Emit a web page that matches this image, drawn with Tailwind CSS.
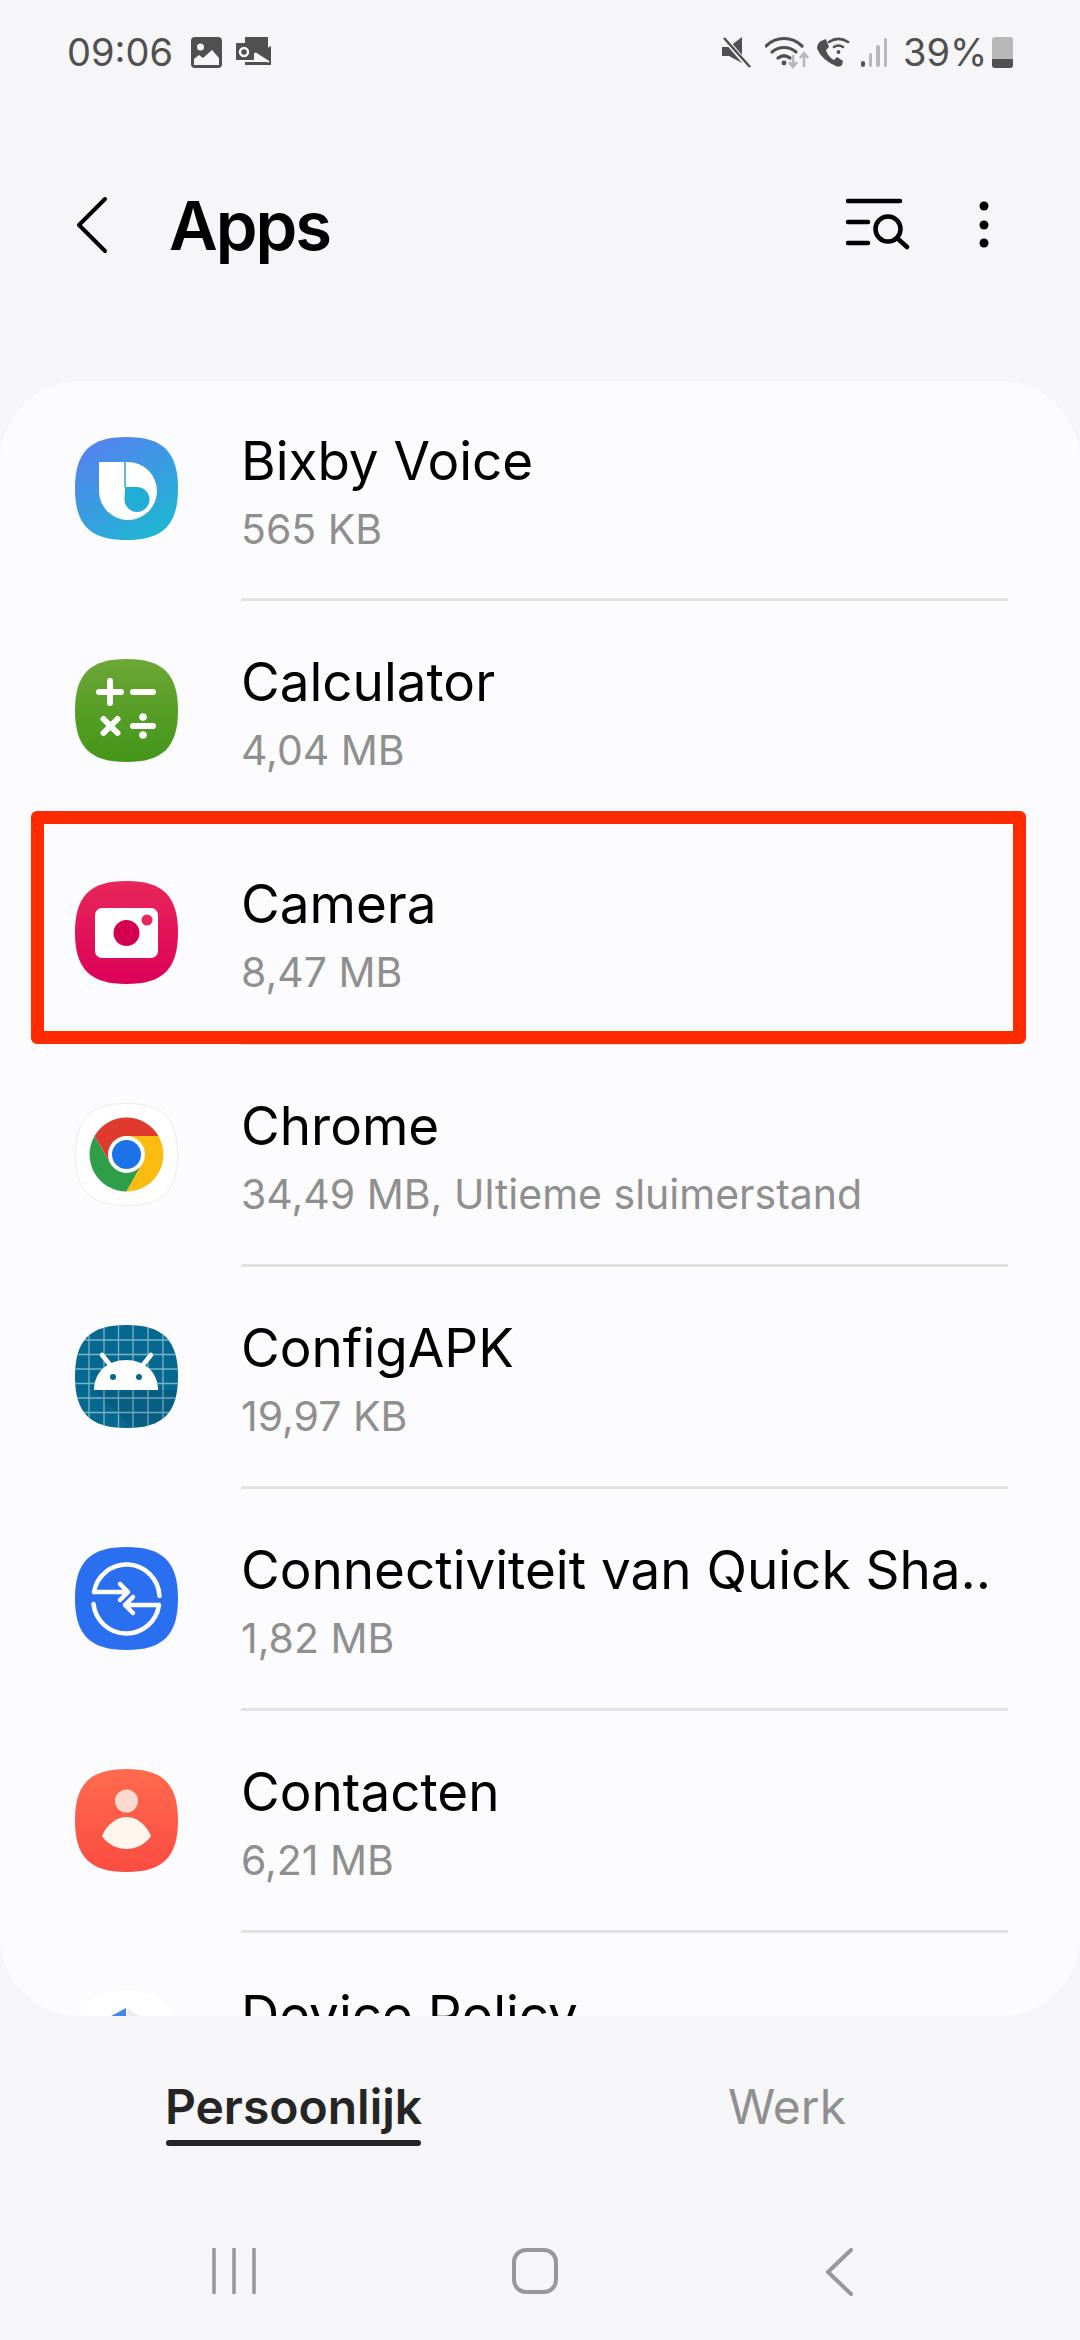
<!DOCTYPE html>
<html lang="en">
<head>
    <meta charset="UTF-8">
    <meta name="viewport" content="width=device-width, initial-scale=1.0">
    <title>Apps</title>
    <script src="https://cdn.jsdelivr.net/npm/@tailwindcss/browser@4"></script>
</head>
<body class="bg-[#f6f6f8]">
<div class="relative w-[1080px] h-[2340px] flex flex-col overflow-hidden font-['Inter',sans-serif]">

    <!-- Status bar -->
    <div class="h-[104px] pl-[67px] pr-[67px] flex items-center justify-between text-[#505050]">
        <div class="flex items-center">
            <span class="text-[38px] leading-none w-[105px] whitespace-nowrap">09:06</span>
            <svg class="ml-[19px]" width="31" height="31" viewBox="0 0 31 31"><rect width="31" height="31" rx="4" fill="#505050"/><circle cx="9.500" cy="10" r="3.500" fill="#f6f6f8"/><path d="M3 28v-6l5-4 4 3 9-8 7 8v7z" fill="#f6f6f8"/></svg>
            <svg class="ml-[14px]" width="36" height="30" viewBox="0 0 36 30"><path d="M9 0h23v11l-11 7-4-3V7H9zM9 25h26v3H9z" fill="#505050"/><rect y="6" width="18" height="17" rx="1" fill="#505050"/><circle cx="8" cy="15" r="4" fill="none" stroke="#f6f6f8" stroke-width="2.500"/><path d="M21 17l14-8v17z" fill="#505050"/><path d="M19 16l14 9" stroke="#f6f6f8" stroke-width="2"/></svg>
        </div>
        <div class="flex items-center">
            <svg width="30" height="32" viewBox="0 0 30 32"><path d="M1 11h7L21 1v26L8 20H1z" fill="#505050"/><path d="M3 2l25 29" stroke="#f6f6f8" stroke-width="5"/><path d="M3 2l26 29" stroke="#505050" stroke-width="2.500"/></svg>
            <svg class="ml-[14px]" width="44" height="34" viewBox="0 0 44 34"><g fill="none" stroke="#505050" stroke-width="3.200" stroke-linecap="round"><path d="M1 11C11 1 27 1 37 11"/><path d="M7 17c7-6 17-6 24 0"/><path d="M13 23c4-3 8-3 12 0"/></g><circle cx="19" cy="28" r="2.400" fill="#505050"/><g fill="none" stroke="#b8b8b8" stroke-width="2.600"><path d="M28 20v12M24 27l4 5 4-5"/><path d="M39 32V18M35 23l4-5 4 5"/></g></svg>
            <svg class="ml-[7px]" width="34" height="30" viewBox="0 0 34 30"><path d="M5 4l5-2 3 8-3 3c1 4 4 8 8 10l3-3 6 4-1 4c-2 2-5 2-8 0C11 25 3 18 1 11 1 8 3 5 5 4z" fill="#505050"/><g fill="none" stroke="#505050" stroke-width="2.600" stroke-linecap="round"><path d="M13 5c6-4 13-4 19 0"/><path d="M18 10c3-2 6-2 9 0"/></g><circle cx="22.500" cy="15" r="1.900" fill="#505050"/></svg>
            <div class="ml-[11px] flex items-end gap-[4px] h-[30px]">
                <div class="w-[3.500px] h-[6px] rounded-full bg-[#505050]"></div>
                <div class="w-[3.500px] h-[14px] rounded-full bg-[#b8b8b8]"></div>
                <div class="w-[3.500px] h-[22px] rounded-full bg-[#b8b8b8]"></div>
                <div class="w-[3.500px] h-[29px] rounded-full bg-[#b8b8b8]"></div>
            </div>
            <span class="ml-[16px] w-[82px] text-[38px] leading-none whitespace-nowrap">39%</span>
            <div class="ml-[7px] w-[21px] h-[31px] rounded-[3px] bg-[#b8b8b8] flex flex-col justify-end overflow-hidden">
                <div class="h-[9px] bg-[#505050]"></div>
            </div>
        </div>
    </div>

    <!-- Header -->
    <div class="h-[277px] pb-[35px] flex items-center">
        <svg class="ml-[75px]" width="34" height="58" viewBox="0 0 34 58"><path d="M30 3L4 29l26 26" fill="none" stroke="#000" stroke-width="4" stroke-linecap="round" stroke-linejoin="round"/></svg>
        <h1 class="ml-[60px] text-[67px] leading-none font-semibold tracking-[-2px] text-black">Apps</h1>
        <svg class="ml-auto" width="64" height="54" viewBox="0 0 64 54"><g stroke="#000" stroke-width="4.500" stroke-linecap="round" fill="none"><path d="M2 3h52M2 24h20M2 45h20"/><circle cx="42" cy="31" r="12.500"/><path d="M51 40l10 9"/></g></svg>
        <svg class="ml-[69px] mr-[91px]" width="10" height="50" viewBox="0 0 10 50"><circle cx="5" cy="6" r="4.500"/><circle cx="5" cy="25" r="4.500"/><circle cx="5" cy="43" r="4.500"/></svg>
    </div>

    <!-- App list -->
    <div class="h-[1635px] bg-[#fcfcfe] rounded-[80px] overflow-hidden">
        <div class="h-[220px] flex items-center pl-[75px]">
            <svg class="-mt-[6px]" width="103" height="103" viewBox="0 0 103 103"><defs><linearGradient id="bx" x1="0.15" y1="0" x2="0.8" y2="1"><stop offset="0" stop-color="#5680f0"/><stop offset="1" stop-color="#1db8d2"/></linearGradient></defs><path d="M51.500 0C88 0 103 15 103 51.500S88 103 51.500 103 0 88 0 51.500 15 0 51.500 0z" fill="url(#bx)"/><path d="M24 25H53A29 29 0 0 1 53 83A29 29 0 0 1 24 54Z" fill="#fff"/><path d="M50 25V50" stroke="#2aa5dc" stroke-width="1.500"/><path d="M50 50H62A12.500 12.500 0 1 1 49.500 62.500Z" fill="#22add6"/></svg>
            <div class="ml-[63px] flex-1 mr-[72px] h-full pt-[5px] border-b-[3px] border-[#e2e2e4] flex flex-col justify-center">
                <div class="text-[53px] leading-[72px] text-black whitespace-nowrap">Bixby Voice</div>
                <div class="mt-[1px] text-[41px] leading-[62px] text-[#8f8f8f] whitespace-nowrap">565 KB</div>
            </div>
        </div>
        <div class="h-[222px] flex items-center pl-[75px]">
            <svg class="-mt-[3px]" width="103" height="103" viewBox="0 0 103 103"><defs><linearGradient id="ca" x1="0" y1="0" x2="0" y2="1"><stop offset="0" stop-color="#6ca735"/><stop offset="1" stop-color="#439619"/></linearGradient></defs><path d="M51.500 0C88 0 103 15 103 51.500S88 103 51.500 103 0 88 0 51.500 15 0 51.500 0z" fill="url(#ca)"/><g stroke="#fff" stroke-width="6" stroke-linecap="round"><path d="M24 33h22M35 22v22M58 33h20M28.500 60l14 14M42.500 60l-14 14"/><path d="M58 67h20"/></g><circle cx="68" cy="58" r="3.800" fill="#fff"/><circle cx="68" cy="76" r="3.800" fill="#fff"/></svg>
            <div class="ml-[63px] flex-1 mr-[72px] h-full pt-[5px] border-b-[3px] border-[#e2e2e4] flex flex-col justify-center">
                <div class="text-[53px] leading-[72px] text-black whitespace-nowrap">Calculator</div>
                <div class="mt-[1px] text-[41px] leading-[62px] text-[#8f8f8f] whitespace-nowrap">4,04 MB</div>
            </div>
        </div>
        <div class="h-[222px] flex items-center pl-[75px]">
            <svg class="-mt-[3px]" width="103" height="103" viewBox="0 0 103 103"><defs><linearGradient id="cm" x1="0" y1="0" x2="0" y2="1"><stop offset="0" stop-color="#e8275a"/><stop offset="1" stop-color="#dc0058"/></linearGradient></defs><path d="M51.500 0C88 0 103 15 103 51.500S88 103 51.500 103 0 88 0 51.500 15 0 51.500 0z" fill="url(#cm)"/><rect x="20" y="27" width="63" height="50" rx="7" fill="#fff"/><circle cx="51.500" cy="52" r="13" fill="#d4004f"/><circle cx="72" cy="39" r="5.500" fill="#e8275a"/></svg>
            <div class="ml-[63px] flex-1 mr-[72px] h-full pt-[5px] border-b-[3px] border-[#e2e2e4] flex flex-col justify-center">
                <div class="text-[53px] leading-[72px] text-black whitespace-nowrap">Camera</div>
                <div class="mt-[1px] text-[41px] leading-[62px] text-[#8f8f8f] whitespace-nowrap">8,47 MB</div>
            </div>
        </div>
        <div class="h-[222px] flex items-center pl-[75px]">
            <svg class="-mt-[3px]" width="103" height="103" viewBox="0 0 103 103"><path d="M51.500 .5C87.500 .5 102.500 15.500 102.500 51.500S87.500 102.500 51.500 102.500 .5 87.500 .5 51.500 15.500 .5 51.500 .5z" fill="#fff" stroke="#ececee"/><path d="M51.500 14.500A37 37 0 0 0 19.500 33L35 60 51.500 33H83.500A37 37 0 0 0 51.500 14.500z" fill="#e0392d"/><path d="M19.500 33A37 37 0 0 0 51.500 88.500L67.500 60H35z" fill="#2f9e48"/><path d="M83.500 33H51.500L67.500 60 51.500 88.500A37 37 0 0 0 83.500 33z" fill="#fbbc12"/><circle cx="51.500" cy="51.500" r="18.500" fill="#fff"/><circle cx="51.500" cy="51.500" r="14.500" fill="#1c73e8"/></svg>
            <div class="ml-[63px] flex-1 mr-[72px] h-full pt-[5px] border-b-[3px] border-[#e2e2e4] flex flex-col justify-center">
                <div class="text-[53px] leading-[72px] text-black whitespace-nowrap">Chrome</div>
                <div class="mt-[1px] text-[41px] leading-[62px] text-[#8f8f8f] whitespace-nowrap">34,49 MB, Ultieme sluimerstand</div>
            </div>
        </div>
        <div class="h-[222px] flex items-center pl-[75px]">
            <svg class="-mt-[3px]" width="103" height="103" viewBox="0 0 103 103"><clipPath id="cf"><path d="M51.500 0C88 0 103 15 103 51.500S88 103 51.500 103 0 88 0 51.500 15 0 51.500 0z"/></clipPath><g clip-path="url(#cf)"><rect width="103" height="103" fill="#07688f"/><path d="M14 0v103M29 0v103M43.500 0v103M58 0v103M73 0v103M88 0v103M0 15h103M0 29.500h103M0 44h103M0 58.500h103M0 73h103M0 87.500h103" stroke="#79b4ca" stroke-width="1.300"/><path d="M19 65l38 38h46V65z" fill="#000" opacity=".08"/><path d="M19 65c0-18 14-30 32-30s32 12 32 30z" fill="#fff"/><path d="M27 30l9 11M76 30l-9 11" stroke="#fff" stroke-width="4.500" stroke-linecap="round"/><circle cx="38" cy="52" r="3" fill="#07688f"/><circle cx="64" cy="52" r="3" fill="#07688f"/></g></svg>
            <div class="ml-[63px] flex-1 mr-[72px] h-full pt-[5px] border-b-[3px] border-[#e2e2e4] flex flex-col justify-center">
                <div class="text-[53px] leading-[72px] text-black whitespace-nowrap">ConfigAPK</div>
                <div class="mt-[1px] text-[41px] leading-[62px] text-[#8f8f8f] whitespace-nowrap">19,97 KB</div>
            </div>
        </div>
        <div class="h-[222px] flex items-center pl-[75px]">
            <svg class="-mt-[3px]" width="103" height="103" viewBox="0 0 103 103"><path d="M51.500 0C88 0 103 15 103 51.500S88 103 51.500 103 0 88 0 51.500 15 0 51.500 0z" fill="#2a6ff0"/><g fill="none" stroke="#fff" stroke-width="4.500" stroke-linecap="round" stroke-linejoin="round"><path d="M19 45A33 33 0 0 1 84.500 49"/><path d="M18.500 57A33 33 0 0 0 84 58"/><path d="M19 45H53M45 37l8 8-8 8"/><path d="M84 58H50M58 50l-8 8 8 8"/></g></svg>
            <div class="ml-[63px] flex-1 mr-[72px] h-full pt-[5px] border-b-[3px] border-[#e2e2e4] flex flex-col justify-center">
                <div class="text-[53px] leading-[72px] text-black whitespace-nowrap">Connectiviteit van Quick Sha..</div>
                <div class="mt-[1px] text-[41px] leading-[62px] text-[#8f8f8f] whitespace-nowrap">1,82 MB</div>
            </div>
        </div>
        <div class="h-[222px] flex items-center pl-[75px]">
            <svg class="-mt-[3px]" width="103" height="103" viewBox="0 0 103 103"><defs><linearGradient id="ct" x1="0" y1="0" x2="0" y2="1"><stop offset="0" stop-color="#ff6b4e"/><stop offset="1" stop-color="#fb4c42"/></linearGradient></defs><path d="M51.500 0C88 0 103 15 103 51.500S88 103 51.500 103 0 88 0 51.500 15 0 51.500 0z" fill="url(#ct)"/><circle cx="51.500" cy="32" r="11.500" fill="#fdd9cf"/><path d="M27 67C32 55 42 48 51.500 48S71 55 76 67C70 76 60 80 51.500 80S33 76 27 67z" fill="#fff6ee"/></svg>
            <div class="ml-[63px] flex-1 mr-[72px] h-full pt-[5px] border-b-[3px] border-[#e2e2e4] flex flex-col justify-center">
                <div class="text-[53px] leading-[72px] text-black whitespace-nowrap">Contacten</div>
                <div class="mt-[1px] text-[41px] leading-[62px] text-[#8f8f8f] whitespace-nowrap">6,21 MB</div>
            </div>
        </div>
        <div class="h-[222px] flex items-center pl-[75px]">
            <svg class="-mt-[3px]" width="103" height="103" viewBox="0 0 103 103"><path d="M51.500 0C88 0 103 15 103 51.500S88 103 51.500 103 0 88 0 51.500 15 0 51.500 0z" fill="#fff"/><path d="M51 17L14 37H51z" fill="#4a86e8"/><path d="M52 17L82 37H52z" fill="#ececee"/></svg>
            <div class="ml-[63px] flex-1 mr-[72px] h-full pt-[5px] flex flex-col justify-center">
                <div class="text-[53px] leading-[72px] text-black whitespace-nowrap">Device Policy</div>
                <div class="mt-[1px] h-[62px]"></div>
            </div>
        </div>
    </div>

    <!-- Tabs -->
    <div class="h-[175px] flex pt-[61px]">
        <div class="ml-[166px] w-[255px] h-[69px] flex flex-col items-center">
            <span class="text-[48px] leading-[60px] font-semibold text-[#252525] whitespace-nowrap">Persoonlijk</span>
            <div class="mt-auto w-full h-[6px] rounded-[3px] bg-[#252525]"></div>
        </div>
        <span class="ml-[307px] text-[48px] leading-[60px] text-[#8f8f8f]">Werk</span>
    </div>

    <!-- Nav bar -->
    <div class="flex-1 flex items-start pt-[57px]">
        <svg class="ml-[212px]" width="44" height="46" viewBox="0 0 44 46"><path d="M2 1v44M22 1v44M42 1v44" stroke="#989898" stroke-width="3.500" stroke-linecap="round"/></svg>
        <svg class="ml-[256px]" width="46" height="46" viewBox="0 0 46 46"><rect x="2" y="2" width="42" height="42" rx="12" fill="none" stroke="#989898" stroke-width="4"/></svg>
        <svg class="ml-[267px]" width="28" height="48" viewBox="0 0 28 48"><path d="M26 2L3 24l23 22" fill="none" stroke="#989898" stroke-width="4" stroke-linecap="round" stroke-linejoin="round"/></svg>
    </div>

    <!-- Red highlight over the Camera row -->
    <div class="absolute left-[31px] top-[811px] w-[995px] h-[233px] border-[13px] border-[#ff2a00] rounded-[6px]"></div>
</div>
</body>
</html>
